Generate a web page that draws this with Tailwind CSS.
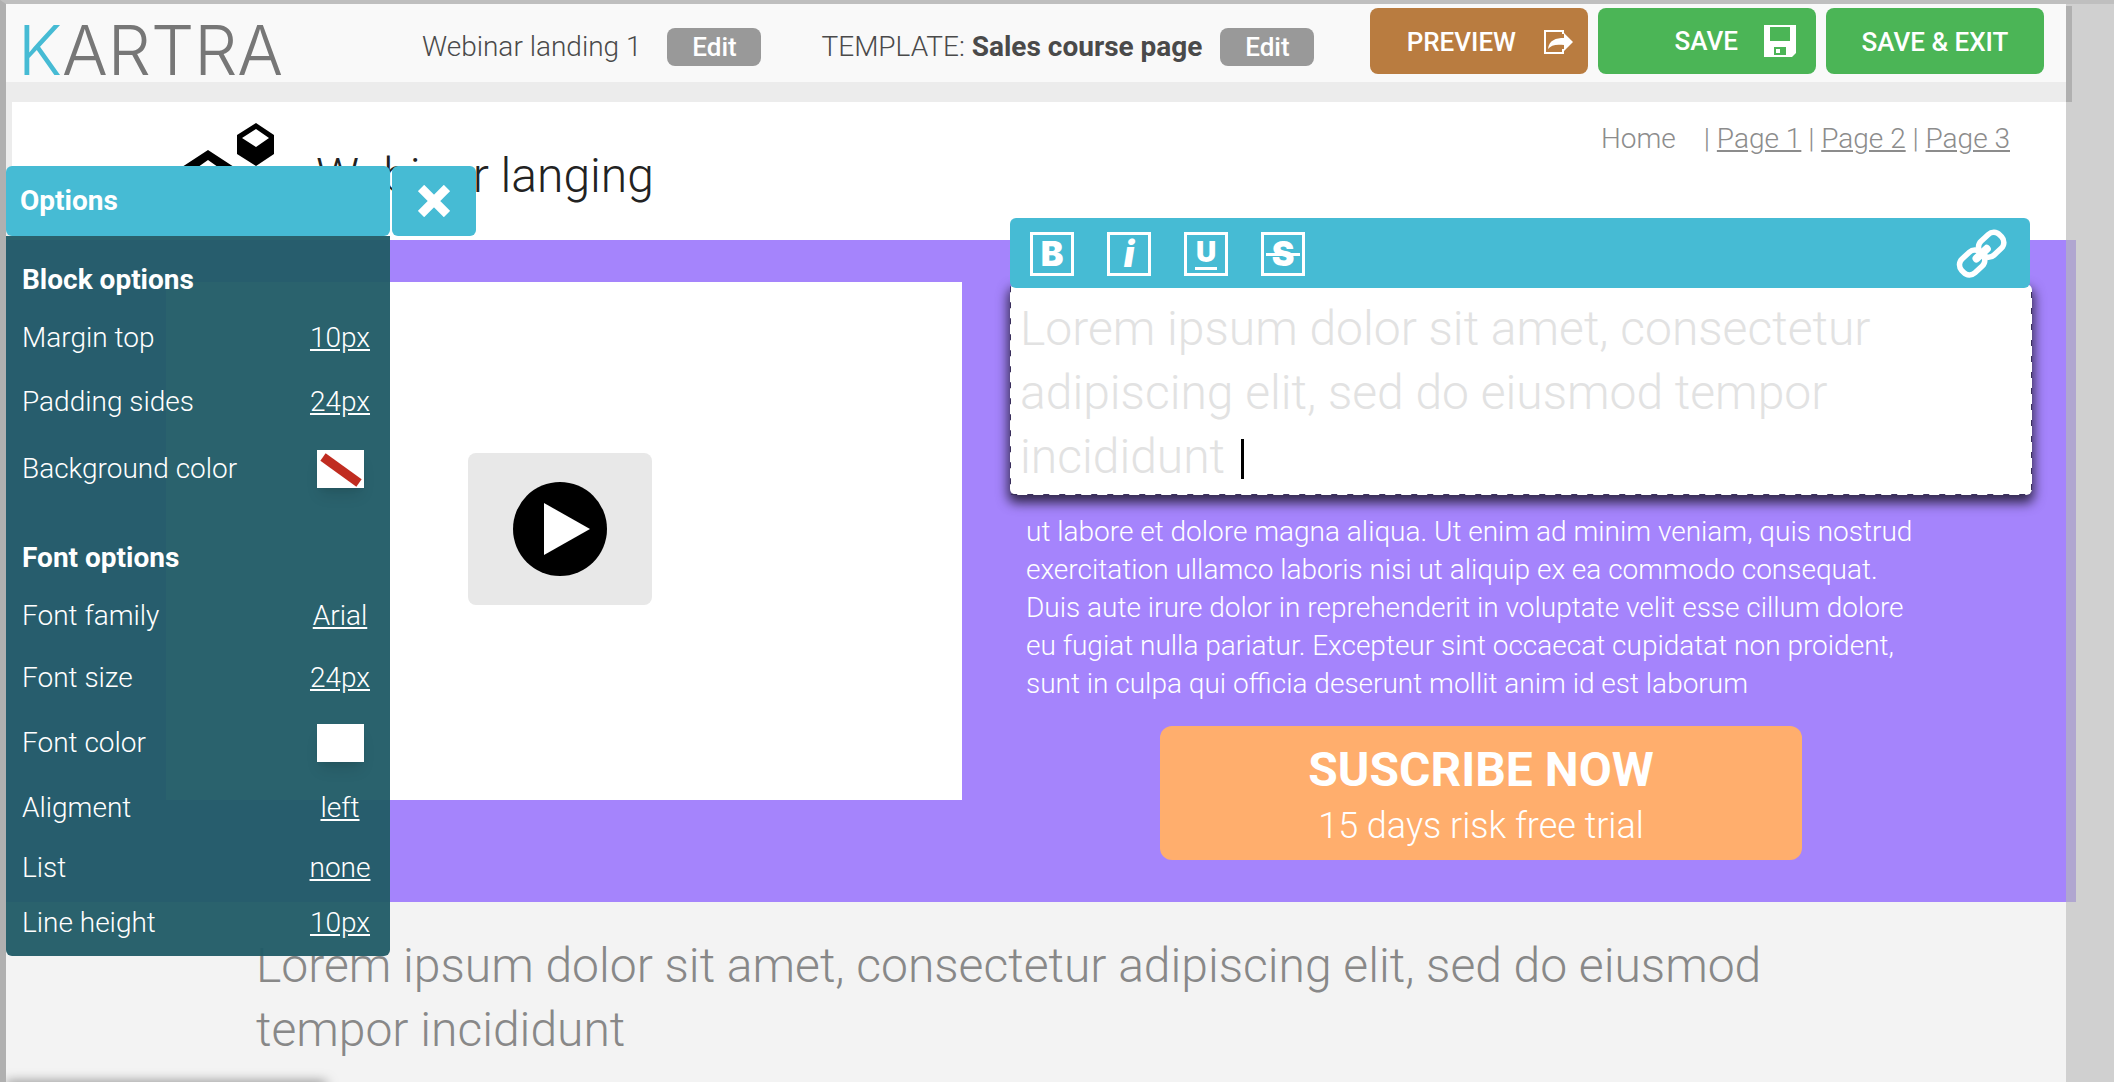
<!DOCTYPE html>
<html lang="en">
<head>
<meta charset="utf-8">
<title>Kartra page editor</title>
<script src="https://cdn.jsdelivr.net/npm/@tailwindcss/browser@4"></script>
</head>
<body class="bg-[#d0d0d0] font-['Roboto',sans-serif] text-[28px] font-light">
<div class="relative flex min-h-screen flex-col overflow-hidden border-l-6 border-t-4 border-l-[#b0b0b0] border-t-[#bfbfbf] pr-12">

  <header class="relative flex h-[78px] items-start bg-[#f9f9f9] pr-[22px] text-[#4a4a4a]">
    <div class="w-[416px] pl-3 pt-2 font-['Inter',sans-serif] text-[68px] font-light leading-[76px] text-[#777]"><span class="text-[#46bbd4]">K</span>ARTRA</div>
    <div class="flex items-center gap-[26px] pt-6">
      <span class="leading-[38px]">Webinar landing 1</span>
      <button class="h-[38px] w-[94px] rounded-lg bg-[#999] text-[26px] font-medium leading-[38px] text-white">Edit</button>
    </div>
    <div class="ml-[60px] flex items-center gap-[18px] pt-6">
      <span class="leading-[38px]">TEMPLATE: <b class="font-bold">Sales course page</b></span>
      <button class="h-[38px] w-[94px] rounded-lg bg-[#999] text-[26px] font-medium leading-[38px] text-white">Edit</button>
    </div>
    <div class="ml-auto flex gap-2.5 pt-1 text-[26px] font-medium text-white">
      <button class="flex h-[66px] w-[218px] items-center justify-end gap-[26px] rounded-lg bg-[#b97c40] pr-3.5 pt-0.5">PREVIEW
        <svg class="h-8 w-8" viewBox="0 0 32 32"><path fill="none" stroke="#fff" stroke-width="2" d="M21 8V5H3v22h18v-4"/><path fill="#fff" d="M6 23C7 14 14 12 22 12V7l9 9-9 9v-6C14 18 9 19 6 23z"/></svg>
      </button>
      <button class="flex h-[66px] w-[218px] items-center justify-end gap-[26px] rounded-lg bg-[#4bb556] pr-5">SAVE
        <svg class="h-8 w-8" viewBox="0 0 32 32"><path fill="#fff" fill-rule="evenodd" d="M0 0h32v28l-4 4H0zM6 2v14h20V2zM10 22v8h12v-8zM12 24h4v4h-4z"/></svg>
      </button>
      <button class="h-[66px] w-[218px] rounded-lg bg-[#4bb556] pt-0.5">SAVE &amp; EXIT</button>
    </div>
    <div class="absolute left-full top-0.5 h-24 w-1.5 bg-[#b0b0b0]"></div>
  </header>
  <div class="h-5 bg-[#ececec]"></div>

  <section class="flex h-[138px] items-start border-l-6 border-[#ececec] bg-white">
    <svg class="ml-[170px] mt-[21px] h-[90px] w-[94px] shrink-0" viewBox="0 0 94 90"><path fill-rule="evenodd" d="M55 12 74 0l18 12v19L74 43 55 31zM60 15l14 9 13-9L74 6z"/><path fill-rule="evenodd" d="M0 44 26 27l26 17v24L26 86 0 68zM9 49l17 11 17-11-17-12z"/></svg>
    <h1 class="ml-[40px] mt-11 text-[48px] leading-[60px] text-[#222]">Webinar langing</h1>
    <nav class="ml-auto mr-[56px] mt-[18px] flex leading-[38px] text-[#8c8c8c]">
      <a href="#" class="mr-7">Home</a>
      <span class="whitespace-pre">| <a href="#" class="underline">Page 1</a> | <a href="#" class="underline">Page 2</a> | <a href="#" class="underline">Page 3</a></span>
    </nav>
  </section>

  <section class="relative flex h-[662px] gap-12 bg-[#a584fc] pl-40 pr-[34px]">
    <div class="mt-[42px] flex h-[518px] flex-[796] items-center justify-center bg-white">
      <button aria-label="Play video" class="mr-2 mt-[-24px] flex h-[152px] w-[184px] items-center justify-center rounded-lg bg-[#e8e8e8]">
        <svg class="size-24" viewBox="0 0 96 96"><circle cx="48" cy="48" r="47"/><path fill="#fff" d="M32 22v52l46-26z"/></svg>
      </button>
    </div>
    <div class="relative flex-[1022]">
      <div role="toolbar" class="absolute -top-[22px] left-0 right-0.5 z-10 flex h-[70px] items-center rounded-md bg-[#46bbd4] pl-5 pr-[22px] pt-0.5 font-['Inter',sans-serif] font-black text-white">
        <div class="flex gap-[33px]">
          <button aria-label="Bold" class="size-11 border-3 border-white text-[34px] leading-[38px]">B</button>
          <button aria-label="Italic" class="size-11 border-3 border-white text-[36px] italic leading-[38px]">i</button>
          <button aria-label="Underline" class="flex size-11 flex-col items-center border-3 border-white pt-1 text-[28px]"><span class="leading-[26px]">U</span><span class="mt-0.5 h-[3px] w-[22px] bg-white"></span></button>
          <button aria-label="Strikethrough" class="relative size-11 border-3 border-white text-[34px] leading-[38px]">S<span class="absolute left-0.5 right-0.5 top-[18px] h-[3px] bg-white"></span></button>
        </div>
        <button aria-label="Insert link" class="ml-auto">
          <svg class="size-13" viewBox="0 0 52 52" fill="none" stroke="#fff" stroke-width="5.500"><g transform="rotate(-43 26 26)"><rect x="0" y="16" width="26" height="19" rx="8"/><rect x="26" y="16" width="26" height="19" rx="8"/><path stroke-linecap="round" stroke-width="8" d="M19 25.500h14"/></g></svg>
        </button>
      </div>
      <div class="relative mt-11 h-[211px] rounded-md bg-white shadow-[0_6px_12px_2px_rgba(0,0,0,0.7)]">
        <svg class="absolute inset-0 h-full w-full" fill="none"><rect width="100%" height="100%" rx="4" stroke="#3a2f5c" stroke-width="2" stroke-dasharray="6 10"/></svg>
        <div contenteditable="true" class="relative pl-2.5 pr-20 pt-[13px] text-[48px] leading-[64px] text-[#e2e2e2]">Lorem ipsum dolor sit amet, consectetur adipiscing elit, sed do eiusmod tempor incididunt <span class="ml-1 inline-block h-10 w-[3px] bg-black align-[-6px]"></span></div>
      </div>
      <p class="pl-4 pr-20 pt-[18px] text-[28px] leading-[38px] text-white">ut labore et dolore magna aliqua. Ut enim ad minim veniam, quis nostrud<br>exercitation ullamco laboris nisi ut aliquip ex ea commodo consequat.<br>Duis aute irure dolor in reprehenderit in voluptate velit esse cillum dolore<br>eu fugiat nulla pariatur. Excepteur sint occaecat cupidatat non proident,<br>sunt in culpa qui officia deserunt mollit anim id est laborum</p>
      <button class="ml-[150px] mt-[23px] block h-[134px] w-[642px] rounded-xl bg-[#ffae6d] pt-1.5 text-white">
        <span class="block text-[48px] font-bold leading-[60px]">SUSCRIBE NOW</span>
        <span class="block text-[36px] leading-[52px]">15 days risk free trial</span>
      </button>
    </div>
    <div class="absolute left-full top-0 h-full w-2.5 bg-[#b0a6d0]"></div>
  </section>

  <section class="flex-1 bg-[#f3f3f3] pl-[250px] pr-72 pt-8 text-[48px] leading-[64px] text-[#888]">Lorem ipsum dolor sit amet, consectetur adipiscing elit, sed do eiusmod tempor incididunt</section>

  <aside class="absolute left-0 top-[162px] w-96 text-white">
    <h2 class="flex h-[70px] items-center rounded-md bg-[#46bbd4] pl-3.5 font-bold">Options</h2>
    <button aria-label="Close options" class="absolute left-[386px] top-0 flex h-[70px] w-[84px] items-center justify-center rounded-md bg-[#46bbd4]">
      <svg class="size-8" viewBox="0 0 32 32" stroke="#fff" stroke-width="9"><path d="M3 3l26 26M29 3 3 29"/></svg>
    </button>
    <div class="rounded-b-md bg-[#215c67]/96 pb-2 pl-4 pr-2.5 pt-[18px]">
      <h3 class="h-[52px] font-bold leading-[52px]">Block options</h3>
      <div class="flex h-16 items-center justify-between">Margin top<a href="#" class="w-20 text-center underline">10px</a></div>
      <div class="flex h-16 items-center justify-between">Padding sides<a href="#" class="w-20 text-center underline">24px</a></div>
      <div class="flex h-[70px] items-center justify-between">Background color<button aria-label="Background color: none" class="mr-4 h-[38px] w-[47px] bg-white shadow-lg"><svg viewBox="0 0 47 38"><path stroke="#c02c20" stroke-width="9" d="M6 7l36 26"/></svg></button></div>
      <h3 class="mt-7 h-[52px] font-bold leading-[52px]">Font options</h3>
      <div class="flex h-16 items-center justify-between">Font family<a href="#" class="w-20 text-center underline">Arial</a></div>
      <div class="flex h-[60px] items-center justify-between">Font size<a href="#" class="w-20 text-center underline">24px</a></div>
      <div class="flex h-[70px] items-center justify-between">Font color<button aria-label="Font color: white" class="mr-4 h-[38px] w-[47px] bg-white shadow-lg"></button></div>
      <div class="flex h-[60px] items-center justify-between">Aligment<a href="#" class="w-20 text-center underline">left</a></div>
      <div class="flex h-[60px] items-center justify-between">List<a href="#" class="w-20 text-center underline">none</a></div>
      <div class="flex h-[50px] items-center justify-between">Line height<a href="#" class="w-20 text-center underline">10px</a></div>
    </div>
  </aside>
  <div class="absolute -bottom-2 left-0 h-2 w-80 shadow-[0_0_12px_0_rgba(0,0,0,0.5)]"></div>
</div>
</body>
</html>
